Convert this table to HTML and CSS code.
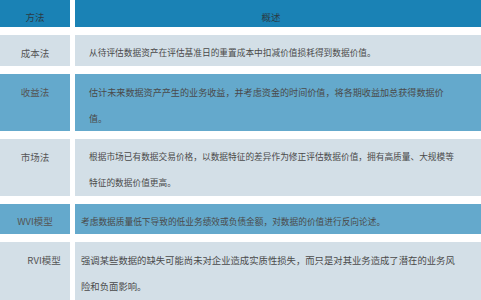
FILE: index.html
```html
<!DOCTYPE html>
<html lang="zh">
<head>
<meta charset="utf-8">
<title>数据资产评估方法</title>
<link rel="stylesheet" href="styles.css">
</head>
<body>
<div class="table">
  <div class="cell head method">方法</div>
  <div class="cell head desc desc--head">概述</div>

  <div class="cell light method">成本法</div>
  <div class="cell light desc size-a">从待评估数据资产在评估基准日的重置成本中扣减价值损耗得到数据价值。</div>

  <div class="cell mid method">收益法</div>
  <div class="cell mid desc size-b">估计未来数据资产产生的业务收益，并考虑资金的时间价值，将各期收益加总获得数据价值。</div>

  <div class="cell light method">市场法</div>
  <div class="cell light desc size-a">根据市场已有数据交易价格，以数据特征的差异作为修正评估数据价值，拥有高质量、大规模等特征的数据价值更高。</div>

  <div class="cell mid method short">WVI模型</div>
  <div class="cell mid desc size-a short desc--tight">考虑数据质量低下导致的低业务绩效或负债金额，对数据的价值进行反向论述。</div>

  <div class="cell light method method--offset last">RVI模型</div>
  <div class="cell light desc size-c desc--tight last">强调某些数据的缺失可能尚未对企业造成实质性损失，而只是对其业务造成了潜在的业务风险和负面影响。</div>
</div>
</body>
</html>
```

FILE: styles.css
```css
html, body {
  margin: 0;
  padding: 0;
  background: #ffffff;
}

body {
  width: 481px;
  height: 300px;
  overflow: hidden;
  font-family: "Noto Sans CJK SC", "Noto Sans", sans-serif;
  color: #4a4a4a;
}

.table {
  display: grid;
  grid-template-columns: 70px 1fr;
  column-gap: 5px;
  row-gap: 8px;
}

.cell {
  padding-top: 5px;
  line-height: 26px;
  box-sizing: border-box;
}

.head {
  background: #1a82b5;
  color: #2b3a44;
  padding-top: 7px;
  line-height: 20px;
  height: 27px;
  font-size: 9.5px;
}

.light {
  background: #d3dfe7;
}

.mid {
  background: #64a9cc;
}

.method {
  text-align: center;
  font-size: 9.5px;
  color: #555555;
}

.head.method {
  color: #2b3a44;
}

.method--offset {
  padding-left: 18px;
}

.desc {
  padding-left: 14px;
  padding-right: 24px;
  color: #4a4a4a;
}

.desc--head {
  text-align: center;
  padding-left: 0;
  padding-right: 14px;
  color: #2b3a44;
}

.desc--tight {
  padding-left: 6px;
}

.size-a {
  font-size: 8.7px;
}

.size-b {
  font-size: 9.1px;
}

.size-c {
  font-size: 9.35px;
}

.short {
  line-height: 25px;
}

.last {
  min-height: 70px;
}
```
